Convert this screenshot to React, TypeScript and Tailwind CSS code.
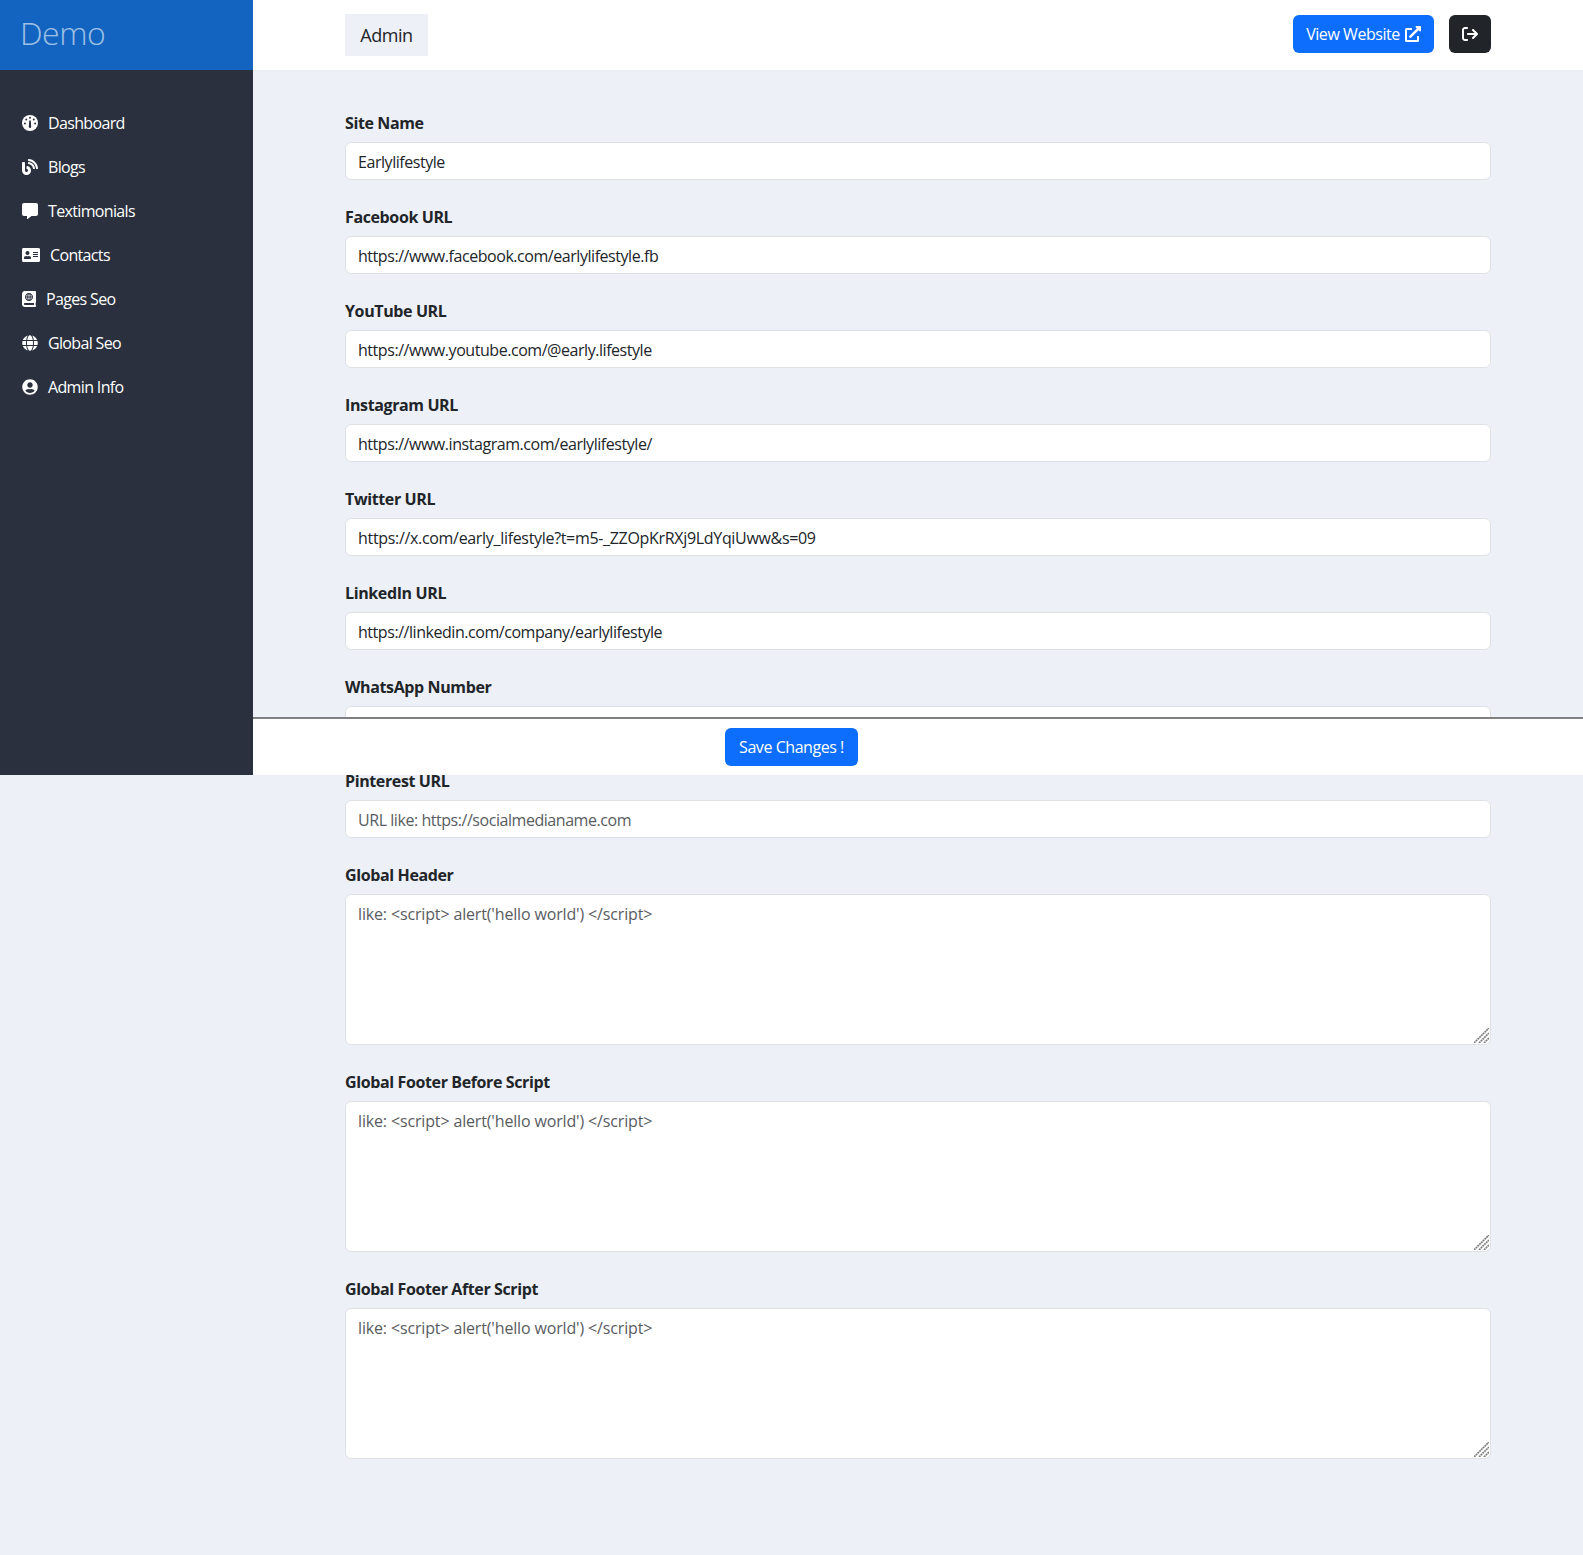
import {
  FaAddressCard,
  FaAtlas,
  FaBlog,
  FaCommentAlt,
  FaExternalLinkAlt,
  FaGlobe,
  FaUserCircle,
} from "react-icons/fa";
import { FaArrowRightFromBracket } from "react-icons/fa6";

function GaugeIcon({ className }: { className?: string }) {
  return (
    <svg viewBox="0 0 16 16" className={className}>
      <circle cx="8" cy="8" r="8" fill="currentColor" />
      <g fill="#2a303d">
        <circle cx="8" cy="2.8" r="1" />
        <circle cx="4.2" cy="4.6" r="1" />
        <circle cx="11.8" cy="4.6" r="1" />
        <circle cx="2.9" cy="8.4" r="1" />
        <circle cx="13.1" cy="8.4" r="1" />
        <path d="M7.2 5.5h1.6l.4 6.2a1.2 1.2 0 1 1-2.4 0z" />
      </g>
    </svg>
  );
}

const navItems = [
  { label: "Dashboard", icon: GaugeIcon, size: "w-4" },
  { label: "Blogs", icon: FaBlog, size: "w-4" },
  { label: "Textimonials", icon: FaCommentAlt, size: "w-4" },
  { label: "Contacts", icon: FaAddressCard, size: "w-[18px]" },
  { label: "Pages Seo", icon: FaAtlas, size: "w-3.5" },
  { label: "Global Seo", icon: FaGlobe, size: "w-4" },
  { label: "Admin Info", icon: FaUserCircle, size: "w-4" },
];

const fields = [
  { label: "Site Name", value: "Earlylifestyle" },
  { label: "Facebook URL", value: "https://www.facebook.com/earlylifestyle.fb" },
  { label: "YouTube URL", value: "https://www.youtube.com/@early.lifestyle" },
  { label: "Instagram URL", value: "https://www.instagram.com/earlylifestyle/" },
  {
    label: "Twitter URL",
    value: "https://x.com/early_lifestyle?t=m5-_ZZOpKrRXj9LdYqiUww&s=09",
    tight: "tracking-[-0.32px]",
  },
  { label: "LinkedIn URL", value: "https://linkedin.com/company/earlylifestyle" },
  { label: "WhatsApp Number", value: "" },
  { label: "Pinterest URL", value: "", placeholder: "URL like: https://socialmedianame.com" },
];

const scripts = ["Global Header", "Global Footer Before Script", "Global Footer After Script"];

function Sidebar() {
  return (
    <aside className="relative z-20 h-[775px] w-[253px] shrink-0 bg-[#2a303d]">
      <div className="flex h-[70px] items-center bg-[#1264c0] pb-[4px] pl-[20px] text-[32px] font-light tracking-[-0.5px] text-white/60">
        Demo
      </div>
      <nav className="flex flex-col pt-[31px] tracking-[-0.65px]">
        {navItems.map((item) => (
          <a key={item.label} className="flex h-11 items-center gap-2.5 pl-[22px] text-white">
            <item.icon className={`h-4 ${item.size}`} />
            <span>{item.label}</span>
          </a>
        ))}
      </nav>
    </aside>
  );
}

function Header() {
  return (
    <header className="flex h-[70px] items-center justify-between bg-white px-[92px]">
      <div className="flex h-[42px] w-[83px] items-center justify-center bg-[#edf0f6] text-lg text-[#212529]">
        Admin
      </div>
      <div className="flex items-center gap-[15px] pb-[2px]">
        <button className="flex h-[38px] w-[141px] items-center justify-center gap-[5px] rounded-md bg-[#0d6efd] text-white">
          View Website
          <FaExternalLinkAlt className="h-4 w-4" />
        </button>
        <button className="flex h-[38px] w-[42px] items-center justify-center rounded-md bg-[#212529] text-white">
          <FaArrowRightFromBracket className="h-4 w-4" />
        </button>
      </div>
    </header>
  );
}

function ResizeGrip() {
  return (
    <svg viewBox="0 0 15 15" className="pointer-events-none absolute bottom-[2px] right-[2px] h-[15px] w-[15px]">
      <path d="M0 15 15 0M5 15 15 5M10 15l5-5" stroke="#7f7f7f" strokeWidth="1.7" strokeDasharray="2 0.5" fill="none" />
    </svg>
  );
}

export default function App() {
  return (
    <div className="relative flex min-h-[1555px] bg-[#edf0f6] font-['Open_Sans',sans-serif] text-base tracking-[-0.45px] text-[#212529]">
      <Sidebar />
      <main className="min-w-0 flex-1">
        <Header />
        <form className="flex flex-col gap-6 px-[92px] pb-[96px] pt-10">
          {fields.map((field) => (
            <div key={field.label}>
              <label className="mb-2 block h-6 pt-[1px] font-bold leading-6 tracking-[-0.38px]">{field.label}</label>
              <input
                readOnly
                value={field.value}
                placeholder={field.placeholder}
                className={`block h-[38px] w-full rounded-md border border-[#dee2e6] bg-white px-3 pt-[2px] text-[#212529] outline-none placeholder:text-[#595c5f] ${field.tight ?? ""}`}
              />
            </div>
          ))}
          {scripts.map((label) => (
            <div key={label}>
              <label className="mb-2 block h-6 pt-[1px] font-bold leading-6 tracking-[-0.38px]">{label}</label>
              <div className="relative">
                <textarea
                  readOnly
                  placeholder="like: <script> alert('hello world') </script>"
                  className="block h-[151px] w-full resize-none rounded-md border border-[#dee2e6] bg-white px-3 pb-1.5 pt-[7px] tracking-[-0.15px] outline-none placeholder:text-[#595c5f]"
                />
                <ResizeGrip />
              </div>
            </div>
          ))}
        </form>
      </main>
      <div className="absolute left-0 right-0 top-[717px] z-10 flex h-[58px] justify-center border-t-2 border-[#808080] bg-white pt-[9px]">
        <button className="h-[38px] w-[133px] rounded-md bg-[#0d6efd] text-white">Save Changes !</button>
      </div>
    </div>
  );
}
